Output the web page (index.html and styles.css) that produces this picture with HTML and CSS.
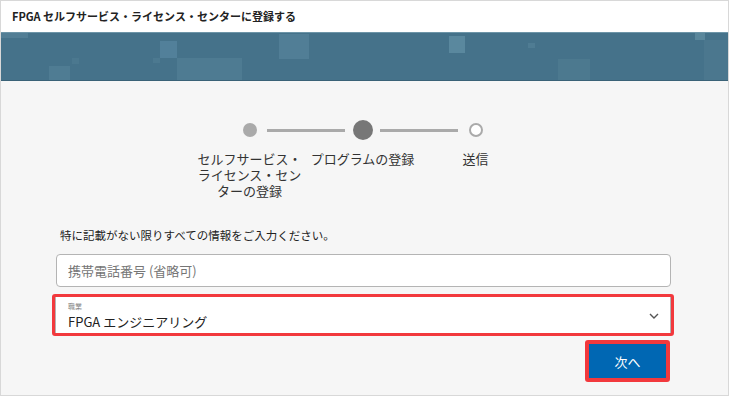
FILE: index.html
```html
<!DOCTYPE html>
<html>
<head>
    <title>FPGA セルフサービス・ライセンス・センターに登録する</title>
    <link rel="stylesheet" href="styles.css">
</head>
<body>
    <div class="page">
        <div class="header">FPGA セルフサービス・ライセンス・センターに登録する</div>
        <div class="banner"></div>

        <div class="content">
            <div class="track">
                <span class="dot done"></span>
                <span class="bar bar-1"></span>
                <span class="dot current"></span>
                <span class="bar bar-2"></span>
                <span class="dot todo"></span>
            </div>
            <div class="step-labels">
                <div class="step-label">セルフサービス・ライセンス・センターの登録</div>
                <div class="step-label">プログラムの登録</div>
                <div class="step-label">送信</div>
            </div>

            <div class="form">
                <p class="intro">特に記載がない限りすべての情報をご入力ください。</p>
                <input type="text" class="field" placeholder="携帯電話番号 (省略可)">
                <div class="highlight">
                    <div class="select">
                        <div class="select-text">
                            <div class="select-label">職業</div>
                            <div class="select-value">FPGA エンジニアリング</div>
                        </div>
                        <svg class="chevron" width="10" height="6" viewBox="0 0 10 6">
                            <path d="M1 1 L5 5 L9 1" fill="none" stroke="#555" stroke-width="1.4"/>
                        </svg>
                    </div>
                </div>
                <div class="actions">
                    <div class="highlight btn-wrap">
                        <button class="next-btn">次へ</button>
                    </div>
                </div>
            </div>
        </div>
    </div>
</body>
</html>
```

FILE: styles.css
```css
body {
    margin: 0;
    font-family: "Noto Sans CJK JP", "Noto Sans", sans-serif;
    background-color: #ffffff;
}
.page {
    width: 729px;
    height: 396px;
    box-sizing: border-box;
    border: 1px solid #d8d8d8;
    background-color: #f6f6f6;
    overflow: hidden;
}
.header {
    height: 31px;
    line-height: 31px;
    padding-left: 11px;
    background-color: #ffffff;
    font-size: 11px;
    font-weight: bold;
    color: #222;
}
.banner {
    height: 47px;
    border-top: 1px solid #6d95a8;
    border-bottom: 1px solid #3a6277;
    background-color: #45728a;
    background-image:
        linear-gradient(#527e95, #527e95),
        linear-gradient(#52809a, #52809a),
        linear-gradient(#4c7990, #4c7990),
        linear-gradient(#4e7b92, #4e7b92),
        linear-gradient(#4f7c93, #4f7c93),
        linear-gradient(#4b788f, #4b788f),
        linear-gradient(#517e96, #517e96),
        linear-gradient(#5a889e, #5a889e),
        linear-gradient(#4f7c93, #4f7c93),
        linear-gradient(#4c798f, #4c798f),
        linear-gradient(#5a879c, #5a879c),
        linear-gradient(#4b778e, #4b778e);
    background-size:
        28px 5px, 17px 17px, 7px 5px, 65px 23px, 21px 15px, 7px 6px,
        30px 25px, 16px 17px, 7px 5px, 32px 22px, 10px 7px, 24px 40px;
    background-position:
        -1px 0, 159px 8px, 152px 25px, 176px 25px, 48px 33px, 71px 25px,
        278px 1px, 448px 3px, 527px 10px, 557px 26px, 694px 0, 703px 7px;
    background-repeat: no-repeat;
}
.content {
    padding-top: 39px;
}
.track {
    display: flex;
    align-items: center;
    height: 20px;
    padding-left: 242px;
}
.dot {
    display: block;
    box-sizing: border-box;
    border-radius: 50%;
}
.dot.done {
    width: 14px;
    height: 14px;
    background-color: #aaaaaa;
}
.dot.current {
    width: 20px;
    height: 20px;
    background-color: #777777;
}
.dot.todo {
    width: 14px;
    height: 14px;
    border: 2px solid #aaaaaa;
    background-color: #ffffff;
}
.bar {
    display: block;
    width: 78px;
    height: 3px;
    background-color: #aaaaaa;
}
.bar-1 {
    margin: 0 8px 0 10px;
}
.bar-2 {
    margin: 0 11px 0 7px;
}
.step-labels {
    display: grid;
    grid-template-columns: 113px 113px 113px;
    margin-top: 11px;
    padding-left: 192px;
}
.step-label {
    text-align: center;
    font-size: 13px;
    line-height: 16px;
    color: #333;
}
.form {
    width: 615px;
    margin-left: 55px;
    margin-top: 28px;
}
.intro {
    margin: 0 0 11px 4px;
    font-size: 11.5px;
    line-height: 16px;
    color: #222;
}
.field {
    display: block;
    width: 615px;
    height: 33px;
    box-sizing: border-box;
    padding: 0 11px;
    border: 1px solid #b4b4b4;
    border-radius: 4px;
    background-color: #ffffff;
    font-family: "Noto Sans CJK JP", "Noto Sans", sans-serif;
    font-size: 13px;
}
.field::placeholder {
    color: #767676;
}
.highlight {
    border: 3px solid #f2393d;
    border-radius: 3px;
}
.form > .highlight {
    margin: 7px -3px 0 -4px;
}
.select {
    display: flex;
    align-items: center;
    height: 36px;
    box-sizing: border-box;
    padding: 0 11px 0 12px;
    border-left: 1px solid #b4b4b4;
    border-right: 1px solid #b4b4b4;
    background-color: #ffffff;
}
.select-text {
    flex: 1;
    padding-top: 2px;
}
.select-label {
    font-size: 7px;
    line-height: 8px;
    color: #888;
}
.select-value {
    margin-top: 4px;
    font-size: 13px;
    line-height: 16px;
    color: #222;
}
.chevron {
    margin-top: 2px;
}
.actions {
    display: flex;
    justify-content: flex-end;
    margin-top: 4px;
}
.btn-wrap {
    border-width: 4px;
    margin-right: 1px;
}
.next-btn {
    display: block;
    width: 77px;
    height: 34px;
    border: none;
    background-color: #0067b3;
    color: #ffffff;
    font-family: "Noto Sans CJK JP", "Noto Sans", sans-serif;
    font-size: 13px;
    cursor: pointer;
}
```
